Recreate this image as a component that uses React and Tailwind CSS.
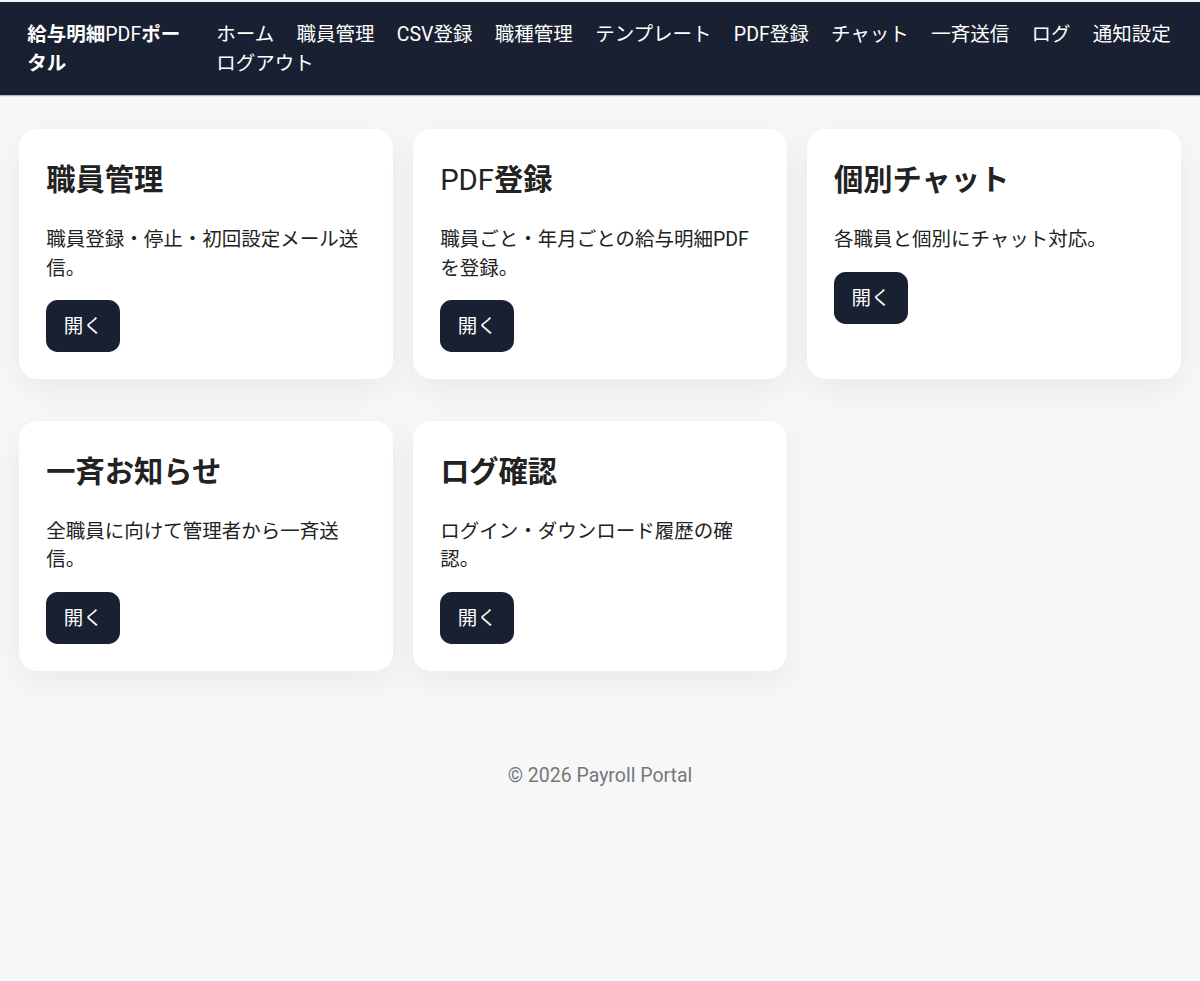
const nav = ["ホーム","職員管理","CSV登録","職種管理","テンプレート","PDF登録","チャット","一斉送信","ログ","通知設定","ログアウト"];
const P = () => <span className="font-normal">PDF</span>;
const cards = [
  [<>職員管理</>,"職員登録・停止・初回設定メール送信。"],
  [<><P />登録</>,"職員ごと・年月ごとの給与明細PDFを登録。"],
  [<>個別チャット</>,"各職員と個別にチャット対応。"],
  [<>一斉お知らせ</>,"全職員に向けて管理者から一斉送信。"],
  [<>ログ確認</>,"ログイン・ダウンロード履歴の確認。"],
];
export default function App() {
  return (
    <div className="min-h-[981px] bg-[#f6f7f9] text-[#222222] font-['Roboto','Noto_Sans_CJK_JP',sans-serif] text-[19.5px] leading-[28.6px]">
      <header className="bg-[#182032] text-white border-t-2 border-[#f6f7f9] pl-[27.3px] pr-[20px] pt-[19px] pb-[16.5px] flex items-start gap-[35px] shadow-[0_1px_1px_rgba(0,0,0,0.25)]">
        <div className="w-[154px] shrink-0 font-bold">給与明細<P />ポータル</div>
        <nav className="flex flex-wrap gap-x-[22.3px]">
          {nav.map(n => <a key={n}>{n}</a>)}
        </nav>
      </header>
      <main className="px-[19px] pt-[34.5px] grid grid-cols-3 gap-x-[19.5px] gap-y-[41.6px]">
        {cards.map(([t,d], i) => (
          <section key={i} className="bg-white rounded-[18.2px] p-[27.3px] shadow-[0_10px_32px_rgba(0,0,0,0.06)] h-[250px]">
            <h2 className="text-[29.25px] leading-[48px] font-bold m-0">{t}</h2>
            <p className="mt-[21.5px] mb-[17px]">{d}</p>
            <button className="block bg-[#182032] text-white rounded-[11.7px] pt-[3px] px-[17.5px] h-[52px]">開く</button>
          </section>
        ))}
      </main>
      <footer className="text-center text-[#777777] mt-[91px]">© 2026 Payroll Portal</footer>
    </div>
  );
}
